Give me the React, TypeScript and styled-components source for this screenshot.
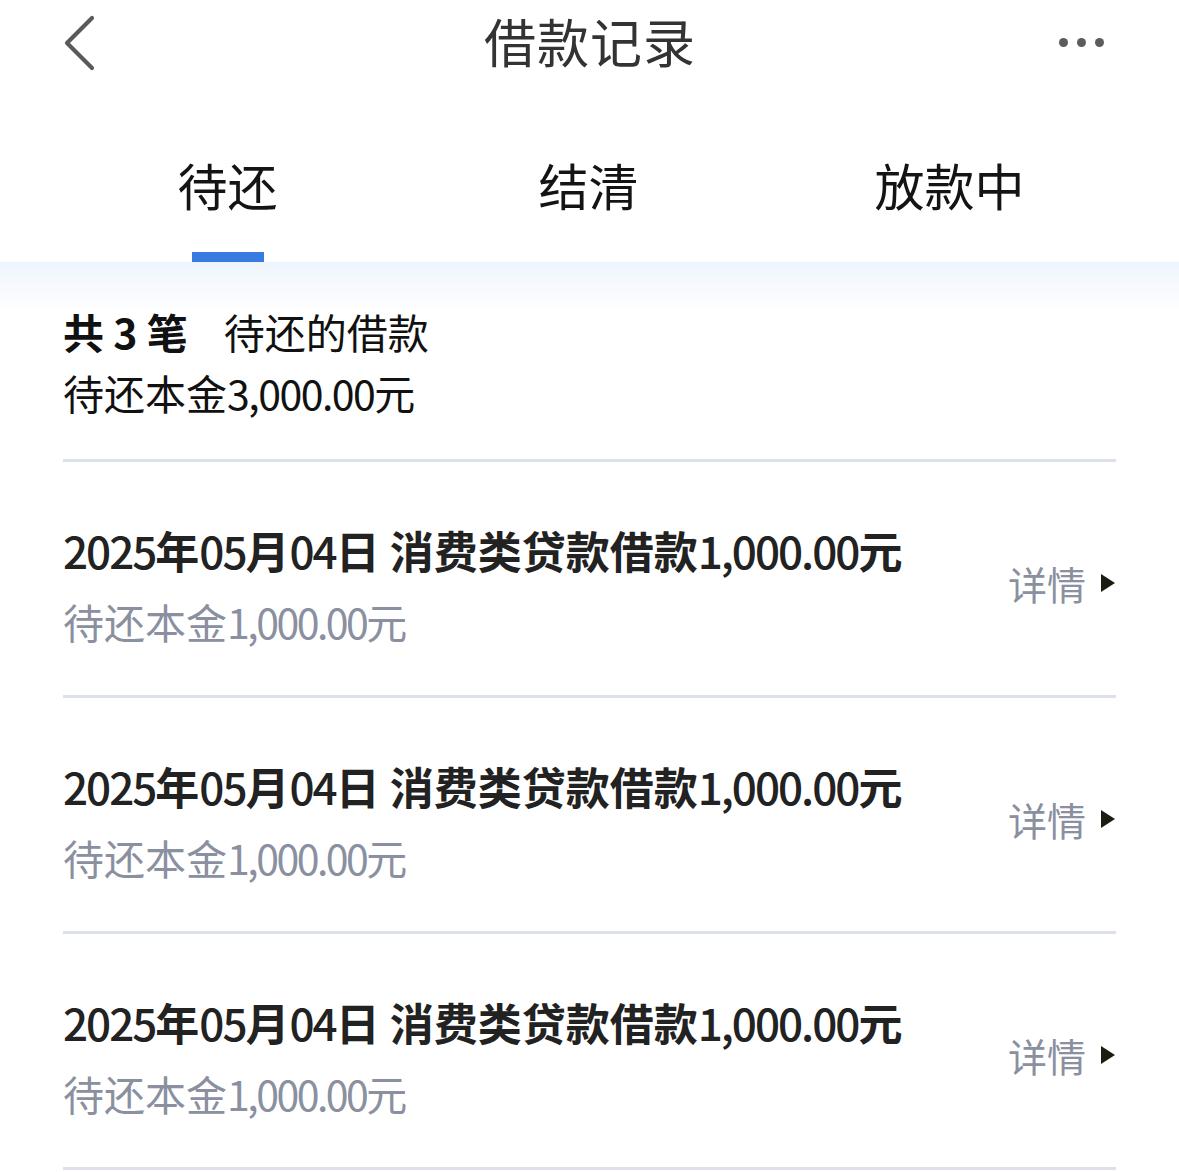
import React from "react";
import styled, { createGlobalStyle } from "styled-components";

const GlobalStyle = createGlobalStyle`
  html, body { margin: 0; padding: 0; background: #ffffff; }
  body { font-family: "Noto Sans CJK SC", "Noto Sans", sans-serif; }
  * { box-sizing: border-box; }
`;

const Page = styled.div`
  width: 1179px;
  min-height: 1172px;
  background: #fff;
  display: flex;
  flex-direction: column;
`;

const Header = styled.header`
  height: 86px;
  display: grid;
  grid-template-columns: 1fr auto 1fr;
  align-items: center;
  padding: 0 63px 0 64px;
`;

const BackButton = styled.button`
  justify-self: start;
  border: 0;
  background: none;
  padding: 0;
  width: 34px;
  height: 56px;
  display: flex;
  align-items: center;
`;

const Title = styled.h1`
  margin: 0 0 4px;
  font-size: 52px;
  font-weight: 400;
  color: #333;
  line-height: 1;
  letter-spacing: 1px;
`;

const MoreButton = styled.button`
  justify-self: end;
  border: 0;
  background: none;
  padding: 0;
  margin-right: 12px;
  display: flex;
  gap: 9px;
  align-items: center;
  margin-bottom: 2px;
`;

const Dot = styled.span`
  width: 9px;
  height: 9px;
  border-radius: 50%;
  background: #5c5c5c;
`;

const TabBar = styled.nav`
  display: grid;
  grid-template-columns: repeat(3, 1fr);
  padding: 0 49px 0 47px;
  height: 176px;
`;

const Tab = styled.div`
  display: flex;
  flex-direction: column;
  align-items: center;
`;

const TabLabel = styled.span`
  margin-top: 68px;
  font-size: 50px;
  line-height: 60px;
  color: #141414;
`;

const TabLine = styled.span<{ $active?: boolean }>`
  margin-top: 38px;
  width: 72px;
  height: 10px;
  background: ${(p) => (p.$active ? "#3a7be2" : "transparent")};
`;

const Content = styled.main`
  background: linear-gradient(to bottom, #eef4fd 0px, #f7f9fe 24px, #ffffff 50px);
  padding: 0 63px;
  flex: 1;
`;

const Summary = styled.section`
  padding: 39px 0 36px;
  border-bottom: 3px solid #dde2ea;
  color: #111;
  font-size: 41px;
  line-height: 61px;
`;

const SummaryLine = styled.div`
  display: flex;
  align-items: baseline;
`;

const Count = styled.strong`
  font-weight: 700;
  margin-right: 36px;
`;

const Num = styled.span<{ $space?: number; $weight?: number }>`
  letter-spacing: ${(p) => p.$space ?? -2}px;
  font-weight: ${(p) => p.$weight ?? "inherit"};
`;

const Row = styled.div`
  display: flex;
  align-items: center;
  justify-content: space-between;
  padding: 58px 0 44px;
  border-bottom: 3px solid #dde2ea;
`;

const RowInfo = styled.div`
  display: flex;
  flex-direction: column;
  gap: 11px;
`;

const RowTitle = styled.div`
  font-size: 44px;
  line-height: 60px;
  font-weight: 700;
  color: #222;
`;

const RowSub = styled.div`
  font-size: 41px;
  line-height: 60px;
  font-weight: 400;
  color: #8a909f;
`;

const Detail = styled.div`
  display: flex;
  align-items: center;
  gap: 14px;
  margin-bottom: 6px;
  color: #8a909f;
  font-size: 39px;
  line-height: 50px;
`;

const loans = [
  { id: 1, date: ["2025", "05", "04"], amount: "1,000.00", left: "1,000.00" },
  { id: 2, date: ["2025", "05", "04"], amount: "1,000.00", left: "1,000.00" },
  { id: 3, date: ["2025", "05", "04"], amount: "1,000.00", left: "1,000.00" },
];

const tabs = ["待还", "结清", "放款中"];

export default function App() {
  return (
    <Page>
      <GlobalStyle />
      <Header>
        <BackButton aria-label="返回">
          <svg width="34" height="56" viewBox="0 0 34 56">
            <polyline
              points="28,3 3,28 28,53"
              fill="none"
              stroke="#5a5a5a"
              strokeWidth="4.2"
              strokeLinecap="round"
              strokeLinejoin="round"
            />
          </svg>
        </BackButton>
        <Title>借款记录</Title>
        <MoreButton aria-label="更多">
          <Dot />
          <Dot />
          <Dot />
        </MoreButton>
      </Header>
      <TabBar>
        {tabs.map((t, i) => (
          <Tab key={t}>
            <TabLabel>{t}</TabLabel>
            <TabLine $active={i === 0} />
          </Tab>
        ))}
      </TabBar>
      <Content>
        <Summary>
          <SummaryLine>
            <Count>共 3 笔</Count>
            <span>待还的借款</span>
          </SummaryLine>
          <SummaryLine>
            待还本金<Num $space={-1.5}>3,000.00</Num>元
          </SummaryLine>
        </Summary>
        {loans.map((l) => (
          <Row key={l.id}>
            <RowInfo>
              <RowTitle>
                <Num $space={-2} $weight={500}>{l.date[0]}</Num>年
                <Num $space={-2} $weight={500}>{l.date[1]}</Num>月
                <Num $space={-2} $weight={500}>{l.date[2]}</Num>日 消费类贷款借款
                <Num $space={-2} $weight={500}>{l.amount}</Num>元
              </RowTitle>
              <RowSub>
                待还本金<Num $space={-2.5}>{l.left}</Num>元
              </RowSub>
            </RowInfo>
            <Detail>
              <span>详情</span>
              <svg width="16" height="20" viewBox="0 0 16 20">
                <polygon points="1,1 15,10 1,19" fill="#1c1c12" />
              </svg>
            </Detail>
          </Row>
        ))}
      </Content>
    </Page>
  );
}
